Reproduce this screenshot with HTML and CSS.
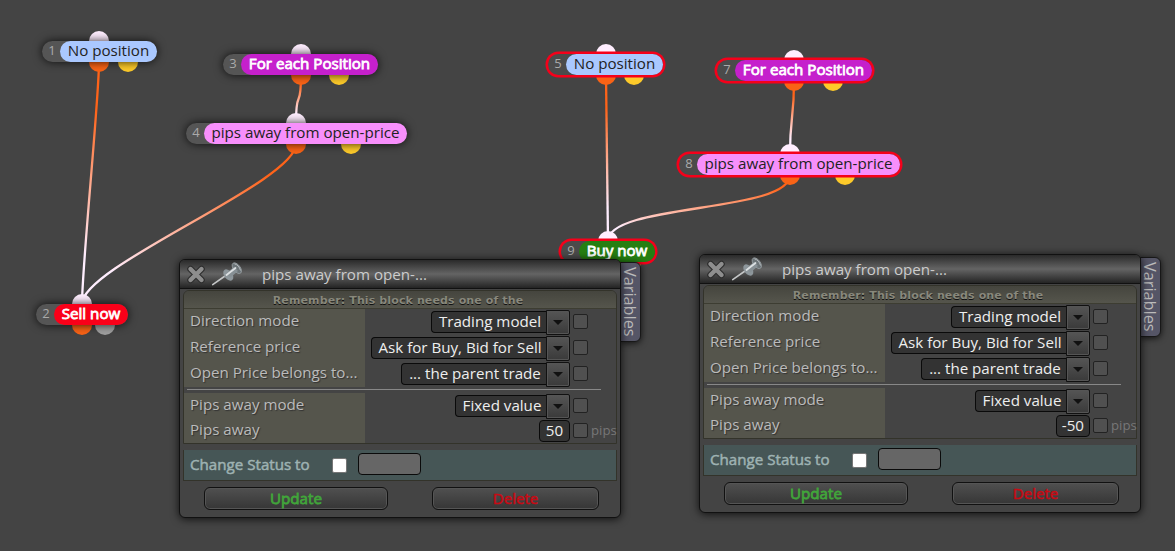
FILE: index.html
```
<!DOCTYPE html>
<html lang="en">
<head>
    <meta charset="UTF-8">
    <meta name="viewport" content="width=device-width, initial-scale=1.0">
    <title>Strategy Blocks</title>
    <link rel="stylesheet" href="styles.css">
</head>
<body>
    <div class="canvas" id="canvas">
        <svg class="wires" id="wires" width="1175" height="551"></svg>
    </div>

    <template id="panelTemplate">
        <div class="panel">
            <div class="variables">Variables</div>
            <div class="frame">
                <div class="header">
                    <svg class="close" width="22" height="22" viewBox="0 0 22 22">
                        <path d="M4.5 6L15.5 17M15.5 6L4.5 17" stroke="#2e2e2e" stroke-width="6.6" stroke-linecap="round"/>
                        <path d="M4.5 6L15.5 17M15.5 6L4.5 17" stroke="#8e8e8e" stroke-width="4.4" stroke-linecap="round"/>
                    </svg>
                    <svg class="pin" width="32" height="24" viewBox="0 0 32 24">
                        <path d="M1.7 22.6L14 14" stroke="#c4c6c7" stroke-width="1.6" stroke-linecap="round"/>
                        <ellipse cx="25.8" cy="6.2" rx="3.4" ry="6.2" transform="rotate(-38 25.8 6.2)" fill="#6c7478" stroke="#99a1a5" stroke-width="0.8"/>
                        <ellipse cx="17.3" cy="13" rx="4" ry="6.4" transform="rotate(-38 17.3 13)" fill="#8d969b"/>
                        <path d="M15 11.5L23 5L27 9L19.5 15.5Z" fill="#879095"/>
                        <path d="M15.5 13L24.5 6" stroke="#dce0e2" stroke-width="1.8" stroke-linecap="round"/>
                        <path d="M23.5 1.8Q28 3 29.5 8.5" stroke="#b4babd" stroke-width="1" fill="none"/>
                    </svg>
                    <span class="title">pips away from open-...</span>
                </div>
                <div class="params">
                    <div class="note">Remember: This block needs one of the</div>
                    <div class="row">
                        <div class="label">Direction mode</div>
                        <div class="field"><span class="select w-trading">Trading model</span><span class="arrow"></span><span class="check"></span></div>
                    </div>
                    <div class="row">
                        <div class="label">Reference price</div>
                        <div class="field"><span class="select w-price">Ask for Buy, Bid for Sell</span><span class="arrow"></span><span class="check"></span></div>
                    </div>
                    <div class="row">
                        <div class="label">Open Price belongs to...</div>
                        <div class="field"><span class="select w-trade">... the parent trade</span><span class="arrow"></span><span class="check"></span></div>
                    </div>
                    <div class="divider"></div>
                    <div class="row">
                        <div class="label">Pips away mode</div>
                        <div class="field"><span class="select w-fixed">Fixed value</span><span class="arrow"></span><span class="check"></span></div>
                    </div>
                    <div class="row last">
                        <div class="label">Pips away</div>
                        <div class="field"><span class="number"></span><span class="check"></span><span class="unit">pips</span></div>
                    </div>
                </div>
                <div class="status">
                    <span class="status-label">Change Status to</span>
                    <span class="status-check"></span>
                    <span class="status-input"></span>
                </div>
                <div class="actions">
                    <button class="button update">Update</button>
                    <button class="button delete">Delete</button>
                </div>
            </div>
        </div>
    </template>

    <script>
        // Block positions on the canvas, ports are x offsets from the block's left edge
        const blocks = [
            { id: 1, x: 42, y: 41, w: 115, text: 'No position', type: 'condition', port: 57, second: 86 },
            { id: 2, x: 36, y: 304, w: 92, text: 'Sell now', type: 'sell', port: 46, second: 69 },
            { id: 3, x: 223, y: 54, w: 155, text: 'For each Position', type: 'loop', port: 78, second: 116 },
            { id: 4, x: 186, y: 123, w: 221, text: 'pips away from open-price', type: 'filter', port: 110, second: 165 },
            { id: 5, x: 548, y: 54, w: 115, text: 'No position', type: 'condition', port: 58, second: 86, selected: true },
            { id: 7, x: 717, y: 60, w: 155, text: 'For each Position', type: 'loop', port: 77, second: 116, selected: true },
            { id: 8, x: 679, y: 154, w: 221, text: 'pips away from open-price', type: 'filter', port: 111, second: 166, selected: true },
            { id: 9, x: 561, y: 241, w: 94, text: 'Buy now', type: 'buy', port: 47, second: 70, selected: true }
        ];
        const links = [[1, 2], [3, 4], [4, 2], [5, 9], [7, 8], [8, 9]];
        const panels = [
            { x: 179, y: 259, pips: '50' },
            { x: 699, y: 254, pips: '-50' }
        ];

        const canvas = document.getElementById('canvas');

        function drawLinks() {
            let defs = '';
            let paths = '';
            links.forEach(([from, to], i) => {
                const a = blocks.find((b) => b.id === from);
                const b = blocks.find((b) => b.id === to);
                const x1 = a.x + a.port;
                const y1 = a.y + 21;
                const x2 = b.x + b.port;
                const y2 = b.y;
                const bend = 38;
                defs += `<linearGradient id="wire${i}" gradientUnits="userSpaceOnUse" x1="0" y1="${y1}" x2="0" y2="${y2}">
                    <stop offset="0.2" stop-color="#ff6319"/><stop offset="0.8" stop-color="#ffeeff"/></linearGradient>`;
                paths += `<path d="M${x1} ${y1}C${x1} ${y1 + bend} ${x2} ${y2 - bend} ${x2} ${y2}" stroke="url(#wire${i})" stroke-width="2.3" fill="none"/>`;
            });
            document.getElementById('wires').innerHTML = `<defs>${defs}</defs>${paths}`;
        }

        function drawBlocks() {
            blocks.forEach((b) => {
                const div = document.createElement('div');
                div.className = 'block ' + b.type + (b.selected ? ' selected' : '');
                div.style.cssText = `left: ${b.x}px; top: ${b.y}px; width: ${b.w}px`;
                div.innerHTML = `
                    <i class="port in" style="left: ${b.port - 10}px"></i>
                    <i class="port out" style="left: ${b.port - 10}px"></i>
                    <i class="port out second" style="left: ${b.second - 10}px"></i>
                    <div class="pill"><span class="num">${b.id}</span><span class="name">${b.text}</span></div>`;
                canvas.appendChild(div);
            });
        }

        function drawPanels() {
            panels.forEach((p) => {
                const node = document.getElementById('panelTemplate').content.cloneNode(true);
                const panel = node.querySelector('.panel');
                panel.style.left = p.x + 'px';
                panel.style.top = p.y + 'px';
                panel.querySelector('.number').innerText = p.pips;
                canvas.appendChild(node);
            });
        }

        drawLinks();
        drawBlocks();
        drawPanels();
    </script>
</body>
</html>
```
FILE: styles.css
```
* {
    box-sizing: border-box;
}
body {
    margin: 0;
    background-color: #444444;
    font-family: "Open Sans", "Noto Sans", sans-serif;
    font-size: 15.15px;
    overflow: hidden;
}
.canvas {
    position: relative;
    width: 1175px;
    height: 551px;
    overflow: hidden;
}
.wires {
    position: absolute;
    left: 0;
    top: 0;
}

/* blocks */
.block {
    position: absolute;
    height: 21px;
}
.port {
    position: absolute;
    width: 20px;
    height: 20px;
    border-radius: 50%;
    background-color: #ffeeff;
}
.port.in {
    top: -10px;
}
.port.out {
    top: 11px;
    background-color: #f96316;
}
.port.second {
    background-color: #fdca2a;
}
.sell .port.second {
    background-color: #a0a0a0;
}
.pill {
    position: relative;
    display: flex;
    height: 21px;
    border-radius: 11px;
    background-color: #555555;
    box-shadow: 0 0 10px rgba(0, 0, 0, 0.8);
}
.selected .pill {
    box-shadow: 0 0 0 2.5px #f5001a;
    background-color: #4b4b4b;
}
.num {
    width: 18px;
    padding-left: 2px;
    text-align: center;
    font-size: 13px;
    line-height: 19px;
    color: #aaaaaa;
}
.name {
    flex: 1;
    border-radius: 11px;
    text-align: center;
    line-height: 19px;
    white-space: nowrap;
    color: #222222;
}
.condition .name {
    background-color: #aac8ff;
}
.filter .name {
    background-color: #f78ffb;
}
.loop .name,
.sell .name,
.buy .name {
    color: #ffffff;
    -webkit-text-stroke: 0.8px #ffffff;
}
.loop .name {
    background-color: #c520cc;
}
.sell .name {
    background-color: #fa0019;
}
.buy .name {
    background-color: #267f12;
}

/* settings panels */
.panel {
    position: absolute;
    width: 442px;
    height: 259px;
}
.frame {
    position: relative;
    height: 259px;
    border: 1px solid #111111;
    border-radius: 6px;
    background-color: #444444;
    box-shadow: 0 1px 9px rgba(0, 0, 0, 0.8);
}
.variables {
    position: absolute;
    left: 441px;
    top: 3px;
    width: 21px;
    height: 80px;
    border: 1px solid #181818;
    border-radius: 0 6px 6px 0;
    background-color: #555566;
    box-shadow: 0 1px 7px rgba(0, 0, 0, 0.8);
    color: #bbbbbb;
    font-size: 16.3px;
    line-height: 21px;
    text-align: center;
    writing-mode: vertical-rl;
}
.header {
    display: flex;
    align-items: center;
    height: 29px;
    padding-left: 6px;
    border-bottom: 1px solid #111111;
    border-radius: 5px 5px 0 0;
    background: linear-gradient(#2a2a2a, #646464 50%, #242424);
}
.pin {
    margin: -1px 0 0 3px;
}
.title {
    margin-left: 19px;
    color: #cccccc;
    line-height: 28px;
}
.params {
    height: 154px;
    margin: 1px 3px 0;
    border: 1px solid #33332a;
    border-radius: 6px 6px 0 0;
}
.note {
    height: 18px;
    border-bottom: 1px solid #3d3d32;
    border-radius: 5px 5px 0 0;
    background: linear-gradient(#45453e, #55554c);
    color: #88887c;
    font-family: "DejaVu Sans", sans-serif;
    font-size: 11px;
    font-weight: bold;
    letter-spacing: 0.12px;
    line-height: 19px;
    padding-right: 4px;
    text-align: center;
    text-shadow: 0 1px 0 #111111;
}
.row {
    display: flex;
    height: 26px;
}
.row.last {
    height: 24px;
}
.label {
    width: 181px;
    padding-left: 6px;
    background-color: #55554c;
    color: #bbbbbb;
    line-height: 23px;
    text-shadow: 1px 1px 1px #333333;
    white-space: nowrap;
}
.row.last .label {
    line-height: 21px;
}
.field {
    display: flex;
    flex: 1;
    align-items: center;
    justify-content: flex-end;
    padding-right: 28px;
}
.row.last .field {
    padding-right: 0;
}
.select,
.number {
    height: 22px;
    border: 1px solid #0a0a0a;
    border-radius: 4px;
    background-color: #333333;
    color: #eeeeee;
    line-height: 19px;
    text-align: center;
    white-space: nowrap;
}
.select {
    padding-left: 2px;
    border-right: none;
    border-radius: 4px 0 0 4px;
}
.w-trading {
    width: 115px;
}
.w-price {
    width: 175px;
}
.w-trade {
    width: 145px;
}
.w-fixed {
    width: 91px;
}
.number {
    min-width: 31px;
    padding: 0 5px;
    line-height: 18px;
}
.arrow {
    display: flex;
    align-items: center;
    justify-content: center;
    width: 24px;
    height: 25px;
    border: 1px solid #111111;
    border-radius: 0 2px 2px 0;
    background: linear-gradient(#555555, #3a3a3a);
    box-shadow: inset 0 0 0 1px #555555;
}
.arrow::after {
    content: "";
    border: 5px solid transparent;
    border-top-color: #111111;
    border-bottom: none;
}
.check {
    width: 15px;
    height: 15px;
    margin: -1px 0 0 3px;
    border: 1px solid #222222;
    border-radius: 2px;
    background-color: #505050;
}
.unit {
    width: 28px;
    padding-left: 3px;
    color: #777777;
    font-size: 13.2px;
    line-height: 20px;
    margin-top: -2px;
}
.divider {
    width: 414px;
    height: 6px;
    margin-left: 3px;
    background: linear-gradient(#888888, #888888) 0 2px / 100% 1px no-repeat;
}
.status {
    display: flex;
    align-items: center;
    height: 31px;
    margin: 6px 3px 0;
    padding-left: 6px;
    border: 1px solid #33332a;
    border-top: none;
    background-color: #465656;
}
.status-label {
    width: 142px;
    margin-top: -2px;
    color: #9eb2b2;
    line-height: 28px;
    -webkit-text-stroke: 0.5px #9eb2b2;
}
.status-check {
    width: 15px;
    height: 15px;
    border: 1px solid #767676;
    border-radius: 2px;
    background-color: #ffffff;
}
.status-input {
    width: 63px;
    height: 22px;
    margin: -2px 0 0 11px;
    border: 1px solid #0a0a0a;
    border-radius: 4px;
    background-color: #666666;
}
.actions {
    display: flex;
    gap: 44px;
    padding: 6px 0 0 24px;
}
.button {
    height: 23px;
    padding: 0;
    border: 1px solid #111111;
    border-radius: 6px;
    background: linear-gradient(#505050, #363636);
    box-shadow: inset 0 0 0 1px #555555;
    font-family: "Open Sans", "Noto Sans", sans-serif;
    font-size: 15.15px;
    line-height: 19px;
}
.update {
    width: 184px;
    color: #41a53a;
    -webkit-text-stroke: 0.8px #41a53a;
}
.delete {
    width: 167px;
    color: #c80a14;
    -webkit-text-stroke: 0.5px #c80a14;
}
```
